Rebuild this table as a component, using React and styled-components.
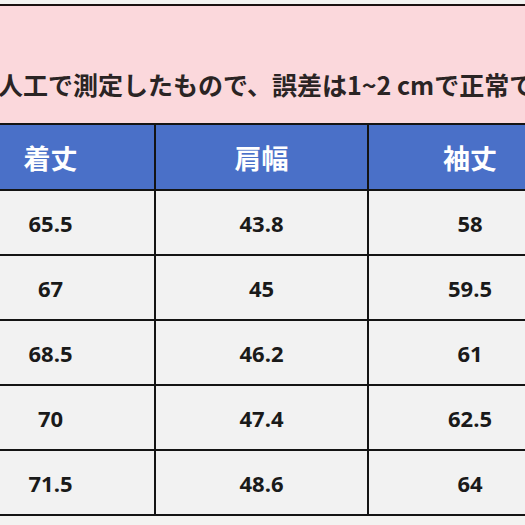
import React from 'react';
import styled, { createGlobalStyle } from 'styled-components';

const GlobalStyle = createGlobalStyle`
  html, body {
    margin: 0;
    padding: 0;
    background: #f1f1ef;
  }
  body {
    font-family: "Noto Sans CJK JP", "Noto Sans", sans-serif;
  }
`;

const Page = styled.div`
  width: 525px;
  height: 525px;
  overflow: hidden;
  background: #f3f3f1;
  padding-top: 4px;
  box-sizing: border-box;
`;

const Notice = styled.div`
  height: 119px;
  border-top: 2px solid #1a1010;
  background: #fbd8dc;
  box-sizing: border-box;
  display: flex;
  align-items: flex-end;
  padding-bottom: 21px;
  overflow: hidden;

  p {
    margin: 0;
    white-space: nowrap;
    text-indent: -2px;
    font-size: 25px;
    line-height: 36px;
    font-weight: 700;
    color: #2a2424;
  }
`;

const Table = styled.table`
  margin-left: -55px;
  width: 626px;
  border-collapse: collapse;
  table-layout: fixed;
  font-family: "Open Sans", "Noto Sans CJK JP", sans-serif;

  th, td {
    border: 2px solid #141414;
    text-align: center;
    padding: 0;
  }

  th {
    height: 64px;
    background: #4a70c8;
    color: #ffffff;
    font-family: "Noto Sans CJK JP", sans-serif;
    font-size: 27px;
    font-weight: 700;
  }

  td {
    height: 63px;
    background: #f2f2f2;
    color: #1a1a1a;
    font-size: 22px;
    font-weight: 700;
  }
`;

const Col = styled.col`
  width: ${p => p.w}px;
`;

const rows = [
  ['65.5', '43.8', '58'],
  ['67', '45', '59.5'],
  ['68.5', '46.2', '61'],
  ['70', '47.4', '62.5'],
  ['71.5', '48.6', '64'],
];

export default () => {
  return (
    <Page>
      <GlobalStyle />
      <Notice>
        <p>人工で測定したもので、誤差は1~2 cmで正常です。</p>
      </Notice>
      <Table>
        <colgroup>
          <Col w={209} />
          <Col w={213} />
          <Col w={204} />
        </colgroup>
        <thead>
          <tr>
            <th>着丈</th>
            <th>肩幅</th>
            <th>袖丈</th>
          </tr>
        </thead>
        <tbody>
          {rows.map((r, i) => (
            <tr key={i}>
              {r.map((v, j) => (
                <td key={j}>{v}</td>
              ))}
            </tr>
          ))}
        </tbody>
      </Table>
    </Page>
  );
};
